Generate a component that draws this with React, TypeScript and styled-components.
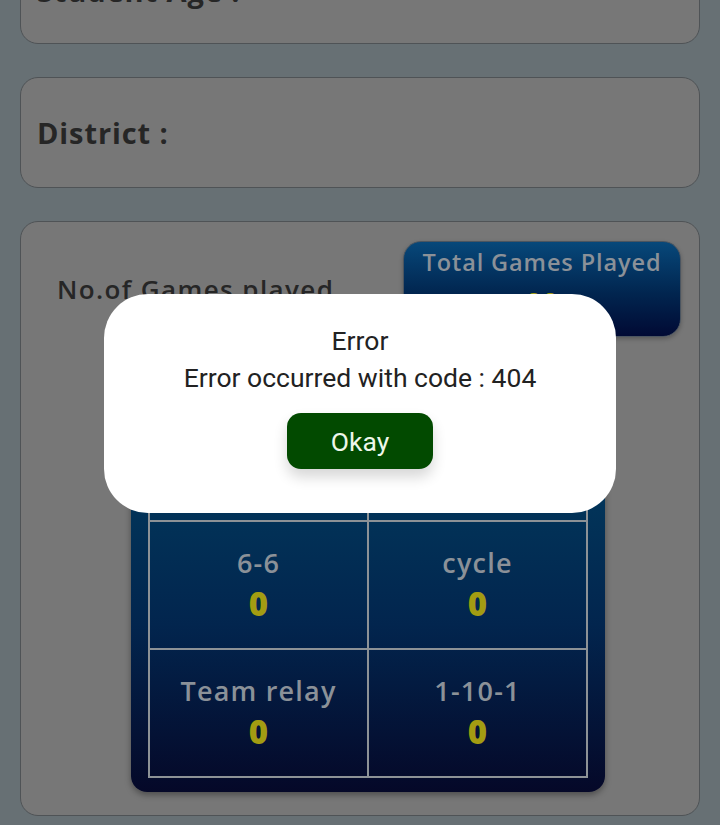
import React from "react";
import styled, { createGlobalStyle } from "styled-components";

const Global = createGlobalStyle`
  html, body { margin: 0; padding: 0; background: #677074; overflow: hidden; }
  body { width: 720px; height: 825px; font-family: "Poppins", "Open Sans", sans-serif; }
  #root { position: relative; width: 720px; height: 825px; overflow: hidden; }
`;

const Page = styled.div`
  display: flex;
  flex-direction: column;
  gap: 33px;
  padding: 0 20px;
  margin-top: -67px;
`;

const InfoCard = styled.div<{ $shift?: number }>`
  height: 111px;
  box-sizing: border-box;
  background: #777777;
  border: 1.5px solid #4f5356;
  border-radius: 18px;
  display: flex;
  align-items: center;
  padding-left: 16px;
  padding-top: ${(p) => p.$shift ?? 0}px;
`;

const InfoLabel = styled.span`
  font-family: "Open Sans", sans-serif;
  font-weight: 700;
  font-size: 29px;
  color: #262626;
  letter-spacing: 0.9px;
`;

const GamesCard = styled.div`
  box-sizing: border-box;
  background: #777777;
  border: 1.5px solid #4f5356;
  border-radius: 18px;
  height: 595px;
  padding: 19px 18px 0 20px;
  display: flex;
  flex-direction: column;
`;

const TopRow = styled.div`
  display: flex;
  align-items: center;
  justify-content: space-between;
`;

const GamesLabel = styled.span`
  font-family: "Open Sans", sans-serif;
  font-weight: 600;
  font-size: 26px;
  color: #262626;
  letter-spacing: 1.4px;
  margin-left: 16px;
`;

const TotalBox = styled.div`
  width: 278px;
  height: 96px;
  box-sizing: border-box;
  border-radius: 18px;
  border: 1.5px solid #4b5560;
  background: linear-gradient(180deg, #07487a 0%, #01254f 55%, #010a34 100%);
  display: flex;
  flex-direction: column;
  align-items: center;
  padding-top: 4px;
  gap: 8px;
  box-shadow: 0 2px 4px rgba(0, 0, 0, 0.25);
`;

const BoxTitle = styled.span`
  font-family: "Open Sans", sans-serif;
  font-weight: 600;
  font-size: 23.5px;
  letter-spacing: 0.9px;
  color: #8b9198;
`;

const Value = styled.span<{ $size?: number }>`
  font-family: "Open Sans", sans-serif;
  font-weight: 800;
  font-size: ${(p) => p.$size ?? 33}px;
  line-height: 1.15;
  color: #a39c12;
`;

const GridBox = styled.div`
  margin-top: 38px;
  margin-left: 90px;
  width: 474px;
  box-sizing: border-box;
  padding: 17px 17px 14px 17px;
  border-radius: 16px;
  background: linear-gradient(180deg, #0a4a7a 0%, #023459 30%, #02254e 60%, #050828 100%);
  box-shadow: 0 3px 6px rgba(0, 0, 0, 0.35);
`;

const Grid = styled.div`
  display: grid;
  grid-template-columns: 1fr 1fr;
  grid-auto-rows: 128px;
  border: 1px solid #8d9296;
`;

const Cell = styled.div`
  border: 1px solid #8d9296;
  display: flex;
  flex-direction: column;
  align-items: center;
  justify-content: center;
  gap: 4px;
  padding-bottom: 2px;
`;

const CellTitle = styled.span`
  font-family: "Open Sans", sans-serif;
  font-weight: 600;
  font-size: 27px;
  letter-spacing: 1.2px;
  line-height: 1.3;
  color: #8b9198;
`;

const Overlay = styled.div`
  position: absolute;
  inset: 0;
  display: flex;
  justify-content: center;
  align-items: flex-start;
  padding-top: 294px;
`;

const Dialog = styled.div`
  width: 512px;
  height: 219px;
  box-sizing: border-box;
  background: #ffffff;
  border-radius: 44px;
  display: flex;
  flex-direction: column;
  align-items: center;
  padding-top: 29px;
  font-family: Roboto, sans-serif;
  color: #222222;
`;

const DialogTitle = styled.div`
  font-size: 26.5px;
  line-height: 36px;
`;

const DialogText = styled.div`
  font-size: 26.5px;
  line-height: 36px;
  margin-top: 1px;
`;

const OkayButton = styled.button`
  margin-top: 17px;
  width: 146px;
  height: 56px;
  border: none;
  border-radius: 14px;
  background: #024a00;
  color: #eef7ea;
  font-family: Roboto, sans-serif;
  font-size: 26.5px;
  box-shadow: 0 8px 14px rgba(0, 0, 0, 0.16);
  cursor: pointer;
`;

const games = [
  { name: "Kho-Kho", value: 0 },
  { name: "Relay", value: 0 },
  { name: "6-6", value: 0 },
  { name: "cycle", value: 0 },
  { name: "Team relay", value: 0 },
  { name: "1-10-1", value: 0 },
];

export default function App() {
  return (
    <>
      <Global />
      <Page>
        <InfoCard $shift={3}>
          <InfoLabel>Student Age :</InfoLabel>
        </InfoCard>
        <InfoCard>
          <InfoLabel>District :</InfoLabel>
        </InfoCard>
        <GamesCard>
          <TopRow>
            <GamesLabel>No.of Games played</GamesLabel>
            <TotalBox>
              <BoxTitle>Total Games Played</BoxTitle>
              <Value $size={28}>00</Value>
            </TotalBox>
          </TopRow>
          <GridBox>
            <Grid>
              {games.map((g) => (
                <Cell key={g.name}>
                  <CellTitle>{g.name}</CellTitle>
                  <Value>{g.value}</Value>
                </Cell>
              ))}
            </Grid>
          </GridBox>
        </GamesCard>
      </Page>
      <Overlay>
        <Dialog>
          <DialogTitle>Error</DialogTitle>
          <DialogText>Error occurred with code : 404</DialogText>
          <OkayButton>Okay</OkayButton>
        </Dialog>
      </Overlay>
    </>
  );
}
